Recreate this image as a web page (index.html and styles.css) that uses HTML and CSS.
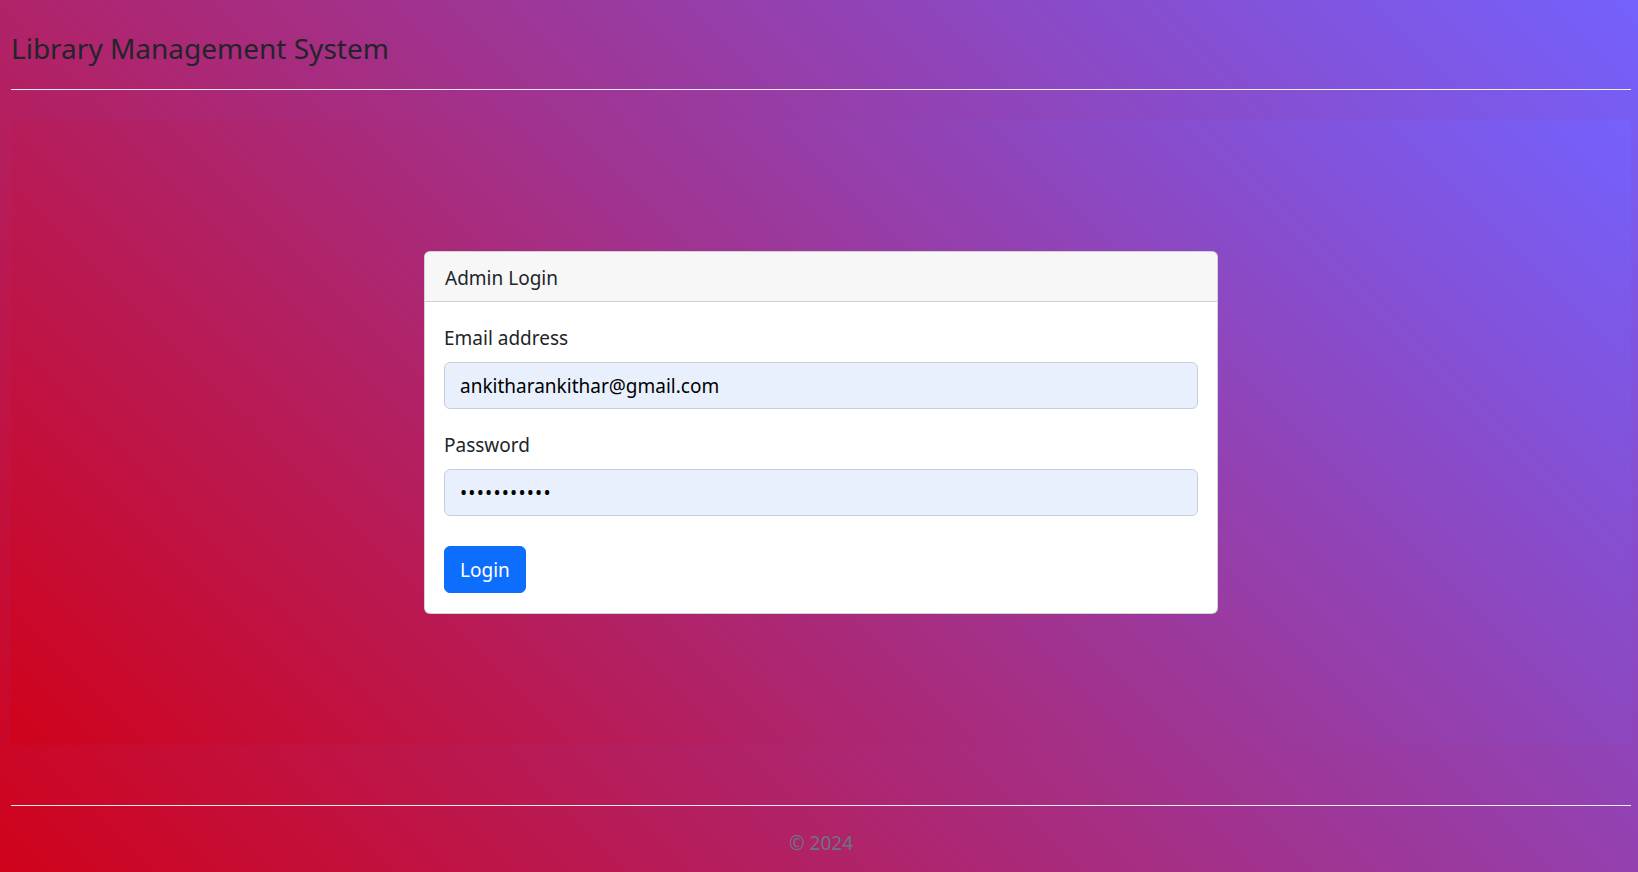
FILE: index.html
```html
<!DOCTYPE html>
<html lang="en">
<head>
<meta charset="utf-8">
<title>Library Management System</title>
<link rel="stylesheet" href="styles.css">
</head>
<body>
<div class="page">
  <header class="site-header">
    <h4 class="site-title">Library Management System</h4>
    <hr class="rule">
  </header>
  <main class="stage">
    <div class="card">
      <div class="card-header">Admin Login</div>
      <div class="card-body">
        <form class="login-form">
          <div class="field">
            <label class="field-label" for="email">Email address</label>
            <input class="field-input" id="email" type="email" value="ankitharankithar@gmail.com">
          </div>
          <div class="field">
            <label class="field-label" for="password">Password</label>
            <input class="field-input field-password" id="password" type="password" value="12345678901">
          </div>
          <button class="btn-primary" type="button">Login</button>
        </form>
      </div>
    </div>
  </main>
  <footer class="site-footer">
    <hr class="rule">
    <p class="copyright">© 2024</p>
  </footer>
</div>
</body>
</html>
```

FILE: styles.css
```css
* { box-sizing: border-box; }

html, body {
  margin: 0;
  padding: 0;
}

body {
  min-height: 872px;
  background: linear-gradient(45deg, #d0021b 0%, #7461fd 100%);
  font-family: "Noto Sans", "Open Sans", sans-serif;
  color: #212529;
  font-size: 19px;
  line-height: 30px;
}

.page {
  padding: 0 7px 0 11px;
}

.site-header {
  padding-top: 29px;
}

.site-title {
  margin: 0;
  font-size: 28px;
  line-height: 38px;
  font-weight: 400;
  color: #212529;
}

.rule {
  margin: 0;
  border: 0;
  height: 1px;
  background: rgba(255, 255, 255, 0.9);
}

.site-header .rule {
  margin-top: 22px;
}

.stage {
  margin-top: 30px;
  height: 625px;
  background: linear-gradient(45deg, #d0021b 0%, #7461fd 100%);
  display: flex;
  align-items: center;
  justify-content: center;
}

.card {
  width: 794px;
  background: #fff;
  border: 1px solid rgba(0, 0, 0, 0.175);
  border-radius: 6px;
  overflow: hidden;
}

.card-header {
  background: #f7f7f7;
  border-bottom: 1px solid rgba(0, 0, 0, 0.15);
  padding: 11px 20px 8px;
  line-height: 30px;
}

.card-body {
  padding: 20px 19px 20px 19px;
}

.field {
  margin-bottom: 20px;
}

.field + .field {
  margin-bottom: 30px;
}

.field-label {
  display: block;
  margin-bottom: 10px;
  padding-top: 2px;
  line-height: 28px;
}

.field-input {
  display: block;
  width: 100%;
  height: 47px;
  padding: 1px 15px 0;
  font-family: inherit;
  font-size: 19px;
  color: #000;
  background: #e8f0fe;
  border: 1px solid #c9ced6;
  border-radius: 6px;
  outline: none;
}

.field-password {
  letter-spacing: 1.2px;
}

.btn-primary {
  display: block;
  height: 47px;
  padding: 1px 15px 0;
  font-family: inherit;
  font-size: 19px;
  color: #fff;
  background: #0d6efd;
  border: 1px solid #0d6efd;
  border-radius: 6px;
}

.site-footer {
  margin-top: 60px;
}

.copyright {
  margin: 22px 0 0;
  text-align: center;
  color: #6c757d;
  line-height: 30px;
}
```
